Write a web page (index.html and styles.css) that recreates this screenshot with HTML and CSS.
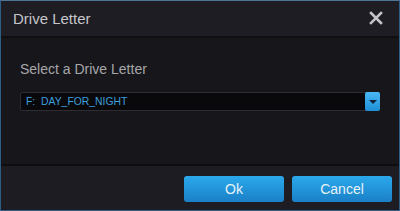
FILE: index.html
```html
<!DOCTYPE html>
<html lang="en">
<head>
    <meta charset="UTF-8">
    <title>Drive Letter</title>
    <link rel="stylesheet" href="styles.css">
</head>
<body>
    <div class="dialog">
        <div class="titlebar">
            <span class="title">Drive Letter</span>
            <svg class="close" viewBox="0 0 14 14" width="14" height="14">
                <path d="M2 2 L12 12 M12 2 L2 12" stroke="#c4c4c8" stroke-width="2.6" stroke-linecap="square"/>
            </svg>
        </div>
        <div class="content">
            <div class="label">Select a Drive Letter</div>
            <div class="select">
                <span class="value">F:&nbsp; DAY_FOR_NIGHT</span>
                <span class="arrow">
                    <svg viewBox="0 0 8 4" width="8" height="4"><path d="M0 0 H8 L4 4 Z" fill="#10233a"/></svg>
                </span>
            </div>
        </div>
        <div class="footer">
            <button class="btn">Ok</button>
            <button class="btn">Cancel</button>
        </div>
    </div>
</body>
</html>
```

FILE: styles.css
```css
html, body {
    margin: 0;
    padding: 0;
    background: #17171b;
}
body {
    width: 400px;
    height: 211px;
    font-family: "Liberation Sans", Arial, sans-serif;
}
.dialog {
    box-sizing: border-box;
    width: 400px;
    height: 211px;
    border: 1px solid #2e5d86;
    border-top-color: #4d7396;
    display: flex;
    flex-direction: column;
    background: #17171b;
}
.titlebar {
    height: 35px;
    flex: none;
    display: flex;
    align-items: center;
    justify-content: space-between;
    padding: 0 16px 0 12px;
    background: #1d1d23;
    border-bottom: 2px solid #0f0f12;
}
.title {
    color: #c6c6ca;
    font-size: 15px;
    margin-top: -1px;
}
.close {
    display: block;
    margin-top: -1px;
}
.content {
    flex: 1;
    padding: 23px 19px 0 19px;
    background: #17171b;
    border-bottom: 2px solid #0e0e11;
}
.label {
    color: #a6a6aa;
    font-size: 14px;
    line-height: 16px;
}
.select {
    margin-top: 15px;
    height: 17px;
    display: flex;
    align-items: center;
    border: 1px solid #2c2c32;
    border-radius: 2px;
    background: #09090c;
}
.value {
    flex: 1;
    color: #3d9fdb;
    font-size: 10.4px;
    padding-left: 5px;
}
.arrow {
    width: 15px;
    height: 19px;
    margin: -1px -1px -1px 0;
    display: flex;
    align-items: center;
    justify-content: center;
    border-radius: 2px;
    background: linear-gradient(#4ab8f4, #1e8fd8);
}
.footer {
    height: 44px;
    flex: none;
    display: flex;
    justify-content: flex-end;
    align-items: center;
    gap: 8px;
    padding: 0 7px 0 0;
    background: #1c1c22;
}
.btn {
    width: 100px;
    height: 26px;
    border: 0;
    border-radius: 3px;
    background: linear-gradient(#2ba9ec, #1a7fc7);
    color: #e6f2fb;
    font-family: "Liberation Sans", Arial, sans-serif;
    font-size: 14px;
    padding: 0;
    margin-top: 1px;
}
```
